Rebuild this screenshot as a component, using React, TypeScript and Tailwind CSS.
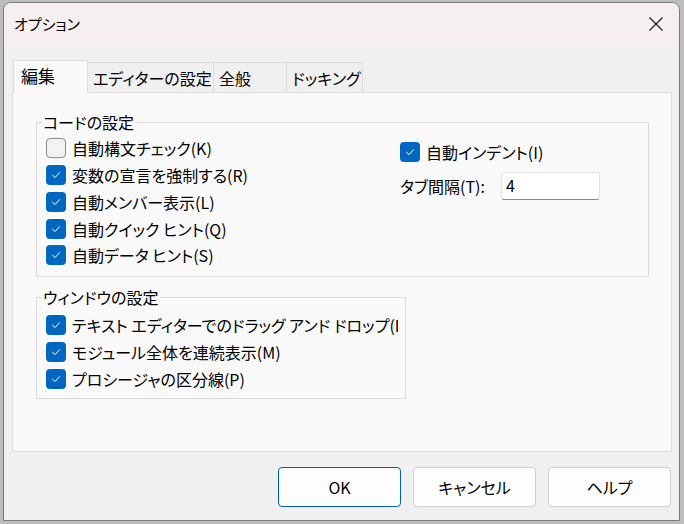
import { useState } from 'react'

function CheckBox({ checked }: { checked: boolean }) {
  return checked ? (
    <span className="flex h-[20px] w-[20px] shrink-0 items-center justify-center rounded-[4px] bg-[#0067c0]">
      <svg width="12" height="12" viewBox="0 0 12 12" fill="none">
        <path d="M2.5 6.3 L5 8.6 L9.6 3.6" stroke="#ffffff" strokeWidth="1" strokeLinecap="round" strokeLinejoin="round" />
      </svg>
    </span>
  ) : (
    <span className="h-[20px] w-[20px] shrink-0 rounded-[4px] border border-[#8a8a8a] bg-[#f3f3f3]" />
  )
}

function Row({ label, checked, className = '' }: { label: string; checked: boolean; className?: string }) {
  return (
    <div className={`flex h-[26.75px] items-center gap-[6px] whitespace-nowrap ${className}`}>
      <CheckBox checked={checked} />
      <span className="leading-none">{label}</span>
    </div>
  )
}

const tabs = ['編集', 'エディターの設定', '全般', 'ドッキング']
const tabWidths = ['w-[75px]', 'w-[126px]', 'w-[73px]', 'w-[76px]']

export default function App() {
  const [tab, setTab] = useState(0)
  const [tabSize, setTabSize] = useState('4')

  return (
    <div className="h-[524px] w-[684px] overflow-hidden bg-[#bdbdbd] pl-[3px] pt-[2px] font-['Noto_Sans_CJK_JP',sans-serif] text-[16px] text-black [font-feature-settings:'palt']">
      <div className="flex h-[519px] w-[677px] flex-col overflow-hidden rounded-t-[8px] border border-[#7a7a7a] bg-[#f0f0f0]">
        {/* title bar */}
        <div className="flex h-[42px] shrink-0 items-center justify-between bg-[#f6eff0] pl-[10px] pr-[12px]">
          <span className="text-[15px]">オプション</span>
          <svg width="16" height="16" viewBox="0 0 16 16" className="mr-[3px]">
            <path d="M1.5 1.5 L14.5 14.5 M14.5 1.5 L1.5 14.5" stroke="#1a1a1a" strokeWidth="1.2" />
          </svg>
        </div>

        <div className="flex flex-1 flex-col px-[8px] pt-[15px]">
          {/* tabs */}
          <div className="flex h-[32px] items-end pl-[1px]">
            {tabs.map((t, i) =>
              i === tab ? (
                <button
                  key={t}
                  onClick={() => setTab(i)}
                  className={`relative z-10 -mb-px flex h-[33px] ${tabWidths[i]} items-center whitespace-nowrap border border-b-0 border-[#dcdcdc] bg-[#f9f9f9] pl-[7px] pb-[2px] text-[17px]`}
                >
                  {t}
                </button>
              ) : (
                <button
                  key={t}
                  onClick={() => setTab(i)}
                  className={`flex h-[30px] ${tabWidths[i]} items-center whitespace-nowrap border border-l-0 border-b-0 border-[#dcdcdc] bg-[#f0f0f0] pl-[5px] text-[16px]`}
                >
                  {t}
                </button>
              )
            )}
          </div>

          {/* panel */}
          <div className="h-[360px] w-[660px] border border-[#dcdcdc] bg-[#f9f9f9] pl-[23px] pt-[18px]">
            <fieldset className="h-[166px] w-[613px] min-w-0 border border-[#dadada] pl-[9px] pr-[7px]">
              <legend className="-ml-[4px] px-[1px] leading-[22px]">コードの設定</legend>
              <div className="flex pt-[2px]">
                <div className="w-[354px]">
                  <Row checked={false} label="自動構文チェック(K)" />
                  <Row checked label="変数の宣言を強制する(R)" />
                  <Row checked label="自動メンバー表示(L)" />
                  <Row checked label="自動クイック ヒント(Q)" />
                  <Row checked label="自動データ ヒント(S)" />
                </div>
                <div className="pt-[4px]">
                  <Row checked label="自動インデント(I)" />
                  <div className="mt-[6px] flex items-center">
                    <span className="w-[101px] whitespace-nowrap">タブ間隔(T):</span>
                    <input
                      value={tabSize}
                      onChange={(e) => setTabSize(e.target.value)}
                      className="h-[28px] w-[99px] rounded-[3px] border border-[#e3e3e3] border-b-[#8a8a8a] bg-white px-[4px] pb-[2px] text-[16px] outline-none"
                    />
                  </div>
                </div>
              </div>
            </fieldset>

            <fieldset className="mt-[9px] h-[113px] w-[370px] min-w-0 overflow-hidden border border-[#dadada] pl-[9px] pr-[7px]">
              <legend className="-ml-[4px] px-[1px] leading-[22px]">ウィンドウの設定</legend>
              <div className="overflow-hidden pt-[4px]">
                <Row checked label="テキスト エディターでのドラッグ アンド ドロップ(D)" />
                <Row checked label="モジュール全体を連続表示(M)" />
                <Row checked label="プロシージャの区分線(P)" />
              </div>
            </fieldset>
          </div>

          {/* buttons */}
          <div className="mt-[15px] flex justify-end gap-[12px]">
            <button className="h-[40px] w-[123px] rounded-[4px] border border-[#005fb8] bg-[#fdfdfd] text-[16px]">OK</button>
            <button className="h-[40px] w-[123px] rounded-[4px] border border-[#d0d0d0] bg-[#fdfdfd] text-[16px]">キャンセル</button>
            <button className="h-[40px] w-[123px] rounded-[4px] border border-[#d0d0d0] bg-[#fdfdfd] text-[16px]">ヘルプ</button>
          </div>
        </div>
      </div>
    </div>
  )
}
